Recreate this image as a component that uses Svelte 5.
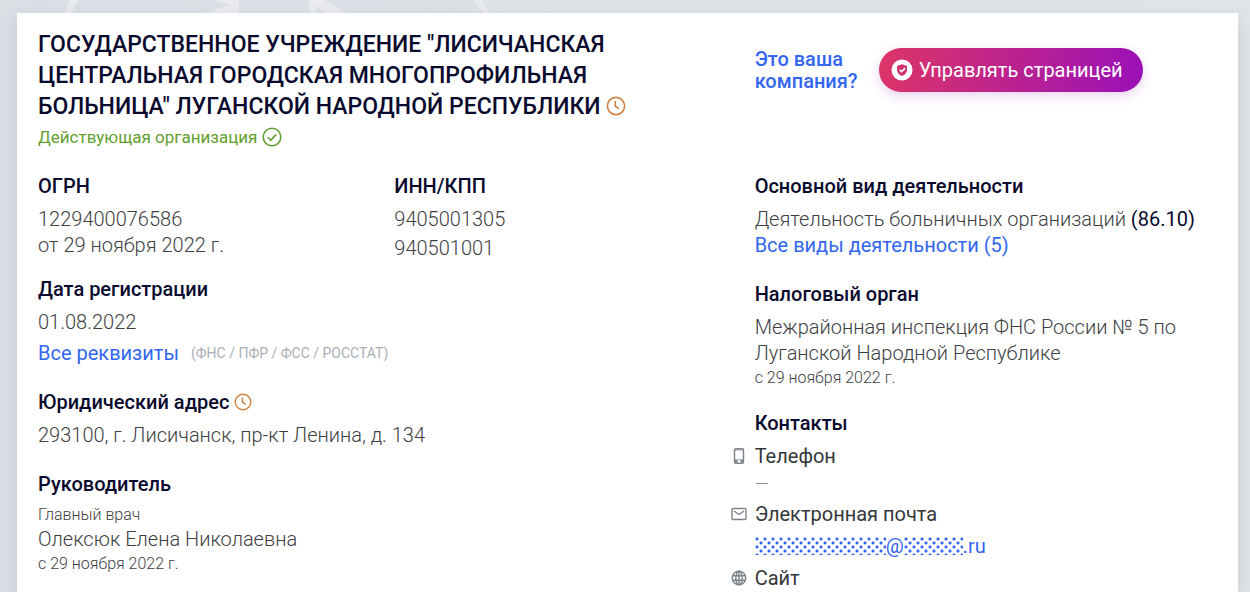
<script lang="ts">
  const title =
    'ГОСУДАРСТВЕННОЕ УЧРЕЖДЕНИЕ "ЛИСИЧАНСКАЯ ЦЕНТРАЛЬНАЯ ГОРОДСКАЯ МНОГОПРОФИЛЬНАЯ БОЛЬНИЦА" ЛУГАНСКОЙ НАРОДНОЙ РЕСПУБЛИКИ';
  const since = "с 29 ноября 2022 г.";
</script>

{#snippet clock()}
  <svg class="clock" viewBox="0 0 20 20" aria-hidden="true">
    <circle cx="10" cy="10" r="8.6" />
    <path d="M9.3 5v5.2l3.8 2.4" />
  </svg>
{/snippet}

<div class="page">
  <svg class="backdrop" viewBox="0 0 700 13" aria-hidden="true">
    <path d="M70 0h9l-8 13h-7zM215 0h24v13h-34l24-8zM309 0h14l24 13h-20l-10-6-2 6h-6zM474 0h8l8 13h-7z" />
  </svg>

  <main class="card">
    <header>
      <h1>{title} <button class="history" aria-label="История названий">{@render clock()}</button></h1>
      <p class="status">
        Действующая организация
        <svg viewBox="0 0 20 20" aria-hidden="true">
          <circle cx="10" cy="10" r="8.8" />
          <path d="M5.8 10.2l3 3.2 5.4-6" />
        </svg>
      </p>
    </header>

    <div class="owner">
      <a class="owner-link" href="#claim">Это ваша компания?</a>
      <button class="manage">
        <svg viewBox="0 0 22 22" aria-hidden="true">
          <circle cx="11" cy="11" r="10.5" fill="#fff" />
          <path d="M11 5.2l5 1.8v3.8c0 3-2 5.2-5 6.3-3-1.1-5-3.3-5-6.3V7z" fill="#d2326f" />
          <path d="M8.6 10.7l2 2 3.4-3.6" fill="none" stroke="#fff" stroke-width="1.6" />
        </svg>
        Управлять страницей
      </button>
    </div>

    <div class="details">
      <div class="codes">
        <section>
          <h2>ОГРН</h2>
          <p>1229400076586</p>
          <p>от 29 ноября 2022 г.</p>
        </section>
        <section>
          <h2>ИНН/КПП</h2>
          <p>9405001305</p>
          <p class="kpp">940501001</p>
        </section>
      </div>
      <section class="registration">
        <h2>Дата регистрации</h2>
        <p>01.08.2022</p>
        <p class="requisites">
          <a href="#requisites">Все реквизиты</a>
          <span>(ФНС / ПФР / ФСС / РОССТАТ)</span>
        </p>
      </section>
      <section class="spaced">
        <h2>Юридический адрес <button class="history" aria-label="История адресов">{@render clock()}</button></h2>
        <p>293100, г. Лисичанск, пр-кт Ленина, д. 134</p>
      </section>
      <section class="spaced">
        <h2>Руководитель</h2>
        <p class="small role">Главный врач</p>
        <p>Олексюк Елена Николаевна</p>
        <p class="small">{since}</p>
      </section>
    </div>

    <div class="details">
      <section>
        <h2>Основной вид деятельности</h2>
        <p>Деятельность больничных организаций <b>(86.10)</b></p>
        <p><a href="#activities">Все виды деятельности (5)</a></p>
      </section>
      <section class="spaced">
        <h2>Налоговый орган</h2>
        <p>Межрайонная инспекция ФНС России № 5 по Луганской Народной Республике</p>
        <p class="small">{since}</p>
      </section>
      <section class="contacts">
        <h2>Контакты</h2>
        <h3>
          <svg viewBox="0 0 16 16" aria-hidden="true">
            <rect x="3.5" y="0.8" width="9" height="14.4" rx="1.2" />
            <path d="M3.5 13.2h3M9.5 13.2h3" stroke-width="2.4" />
            <path d="M3.5 11.8h9M3.5 2h9" stroke-width="0.8" />
          </svg>
          Телефон
        </h3>
        <p class="none">—</p>
        <h3>
          <svg viewBox="0 0 16 16" aria-hidden="true">
            <rect x="1" y="2.5" width="14" height="11" rx="1" />
            <path d="M3 5l5 3.5L13 5" />
          </svg>
          Электронная почта
        </h3>
        <p class="email">
          <a href="#email"><span class="mask name"></span>@<span class="mask domain"></span>.ru</a>
        </p>
        <h3>
          <svg viewBox="0 0 16 16" aria-hidden="true">
            <circle cx="8" cy="8" r="6.8" />
            <ellipse cx="8" cy="8" rx="3.2" ry="6.8" />
            <path d="M1.5 5.7h13M1.5 10.3h13M8 1v14" />
          </svg>
          Сайт
        </h3>
      </section>
    </div>
  </main>
</div>

<style>
  :global(body) {
    margin: 0;
    background: linear-gradient(90deg, #dce0e5, #e0e5e8);
  }

  .page {
    position: relative;
    padding: 13px 12px 0 17px;
    overflow: hidden;
    font-family: Roboto, "Liberation Sans", sans-serif;
    font-size: 20px;
    font-weight: 300;
    line-height: 26px;
    color: #3d4043;
  }

  .backdrop {
    position: absolute;
    top: 0;
    left: 0;
    width: 700px;
    height: 13px;
    fill: #e9ebee;
  }

  .card {
    position: relative;
    display: grid;
    grid-template-columns: 1.55fr 1fr;
    grid-template-rows: auto 1fr;
    box-sizing: border-box;
    min-height: calc(100vh - 13px);
    padding: 16px 21px 0;
    background: #fff;
    box-shadow: 0 6px 16px rgba(70, 90, 110, 0.18);
  }

  h1,
  h2,
  h3,
  p {
    margin: 0;
  }

  h1 {
    max-width: 600px;
    font-size: 23px;
    font-weight: 500;
    line-height: 31px;
    color: #0a0a2e;
  }

  h2 {
    margin-bottom: 7px;
    font-size: 20px;
    font-weight: 500;
    color: #0a0a2e;
  }

  a {
    font-weight: 400;
    color: #3366f0;
    text-decoration: none;
  }

  b {
    font-weight: 400;
    color: #0a0a2e;
  }

  button {
    padding: 0;
    border: 0;
    background: none;
    font: inherit;
    cursor: pointer;
  }

  svg {
    fill: none;
  }

  .history {
    line-height: 0;
    vertical-align: -2px;
  }

  .clock {
    display: block;
    width: 18px;
    height: 18px;
    stroke: #d08040;
    stroke-width: 1.6;
  }

  h1 .clock {
    width: 20px;
    height: 20px;
  }

  .status {
    display: flex;
    align-items: center;
    gap: 5px;
    margin-top: 2px;
    font-size: 17px;
    font-weight: 400;
    color: #62a030;
  }

  .status svg {
    width: 20px;
    height: 20px;
    stroke: #62a030;
    stroke-width: 1.6;
  }

  .owner {
    display: flex;
    align-items: flex-start;
    gap: 16px;
    padding-top: 19px;
  }

  .owner-link {
    width: 108px;
    font-weight: 500;
    line-height: 22px;
  }

  .manage {
    display: flex;
    align-items: center;
    gap: 6px;
    height: 44px;
    padding: 0 20px 0 12px;
    border-radius: 22px;
    background: linear-gradient(100deg, #dc3566, #9a10b8);
    box-shadow: 0 4px 12px rgba(150, 40, 180, 0.2);
    font-weight: 400;
    color: #fff;
    white-space: nowrap;
  }

  .manage svg {
    width: 22px;
    height: 22px;
  }

  .details {
    margin-top: 23px;
  }

  .codes {
    display: grid;
    grid-template-columns: 1fr 1fr;
    padding-right: 4px;
  }

  .kpp {
    margin-top: 3px;
  }

  .registration {
    margin-top: 15px;
  }

  .requisites {
    display: flex;
    gap: 12px;
    margin-top: 5px;
  }

  .requisites span {
    font-size: 14px;
    font-weight: 400;
    color: #aab0b5;
  }

  .spaced {
    margin-top: 23px;
  }

  .small {
    font-size: 16px;
    line-height: 24px;
  }

  .role {
    line-height: 22px;
  }

  .contacts {
    margin-top: 20px;
  }

  h3 {
    display: flex;
    align-items: center;
    gap: 8px;
    margin-left: -24px;
    font-size: 20px;
    font-weight: 400;
    color: #34373a;
  }

  h3 svg {
    width: 16px;
    height: 16px;
    stroke: #7d838a;
    stroke-width: 1.4;
  }

  .none {
    margin: 2px 0 4px;
    font-size: 18px;
    color: #8a9096;
  }

  .email {
    margin: 6px 0;
  }

  .mask {
    display: inline-block;
    height: 18px;
    vertical-align: -2px;
    background:
      radial-gradient(circle at 2px 2px, #3366f0 1px, transparent 2px) 0 0 / 8px 8px,
      radial-gradient(circle at 2px 2px, #3366f0 1px, transparent 2px) 4px 4px / 8px 8px;
  }

  .name {
    width: 131px;
  }

  .domain {
    width: 59px;
  }
</style>
